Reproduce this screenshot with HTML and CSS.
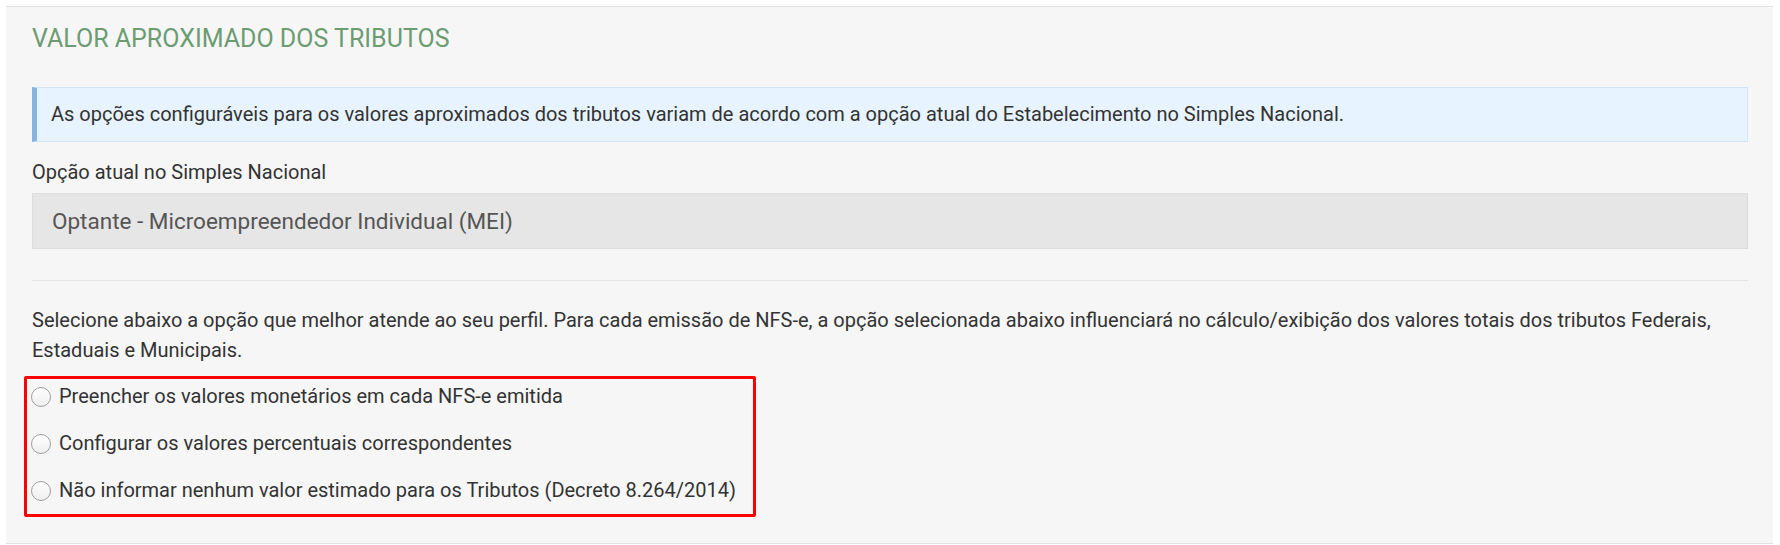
FILE: index.html
```html
<!DOCTYPE html>
<html lang="pt-BR">
<head>
  <meta charset="UTF-8">
  <title>Valor Aproximado dos Tributos</title>
  <link rel="stylesheet" href="styles.css">
</head>
<body>
  <div class="panel">
    <h2 class="panel-title">VALOR APROXIMADO DOS TRIBUTOS</h2>

    <div class="alert-info">
      As opções configuráveis para os valores aproximados dos tributos variam de acordo com a opção atual do Estabelecimento no Simples Nacional.
    </div>

    <div class="form-group">
      <label class="field-label">Opção atual no Simples Nacional</label>
      <div class="form-control">Optante - Microempreendedor Individual (MEI)</div>
    </div>

    <hr class="divider">

    <p class="help-text">
      Selecione abaixo a opção que melhor atende ao seu perfil. Para cada emissão de NFS-e, a opção selecionada abaixo influenciará no cálculo/exibição dos valores totais dos tributos Federais, Estaduais e Municipais.
    </p>

    <div class="options-box">
      <label class="radio-row">
        <input type="radio" name="tributos" value="monetario">
        <span>Preencher os valores monetários em cada NFS-e emitida</span>
      </label>
      <label class="radio-row">
        <input type="radio" name="tributos" value="percentual">
        <span>Configurar os valores percentuais correspondentes</span>
      </label>
      <label class="radio-row">
        <input type="radio" name="tributos" value="nenhum">
        <span>Não informar nenhum valor estimado para os Tributos (Decreto 8.264/2014)</span>
      </label>
    </div>
  </div>
</body>
</html>
```

FILE: styles.css
```css
body {
  margin: 0;
  padding: 6px 7px 0 6px;
  background: #fff;
  font-family: Roboto, "Liberation Sans", sans-serif;
  color: #333;
}

.panel {
  background: #f6f6f6;
  border-top: 1px solid #e2e2e2;
  border-bottom: 1px solid #e2e2e2;
  padding: 18px 25px 26px 26px;
}

.panel-title {
  margin: 0 0 34px 0;
  font-size: 25px;
  line-height: 28px;
  font-weight: 400;
  color: #6c9c72;
}

.alert-info {
  background: #e7f3fe;
  border: 1px solid #d3e5f5;
  border-left: 5px solid #86b3e0;
  padding: 13px 14px;
  font-size: 20px;
  line-height: 27px;
  color: #333;
}

.form-group {
  margin-top: 17px;
}

.field-label {
  display: block;
  font-size: 20px;
  line-height: 27px;
  margin-bottom: 7px;
  color: #333;
}

.form-control {
  background: #e6e6e6;
  border: 1px solid #dcdcdc;
  height: 54px;
  padding: 0 19px;
  display: flex;
  align-items: center;
  font-size: 22.5px;
  color: #555;
}

.divider {
  border: none;
  border-top: 1px solid #e3e3e3;
  margin: 31px 0 0 0;
}

.help-text {
  margin: 24px 0 11px 0;
  font-size: 20px;
  line-height: 30px;
  color: #333;
}

.options-box {
  box-sizing: border-box;
  width: 732px;
  margin-left: -8px;
  border: 3px solid #f00;
  border-radius: 2px;
  padding: 4px 4px 10px 4px;
  display: flex;
  flex-direction: column;
  gap: 20px;
}

.radio-row {
  display: flex;
  align-items: center;
  gap: 8px;
  font-size: 20px;
  line-height: 27px;
  color: #333;
  cursor: pointer;
}

.radio-row input {
  appearance: none;
  -webkit-appearance: none;
  margin: 0;
  width: 20px;
  height: 20px;
  border: 1px solid #9e9e9e;
  border-radius: 50%;
  background: linear-gradient(#fff, #eee);
  flex-shrink: 0;
}
```
